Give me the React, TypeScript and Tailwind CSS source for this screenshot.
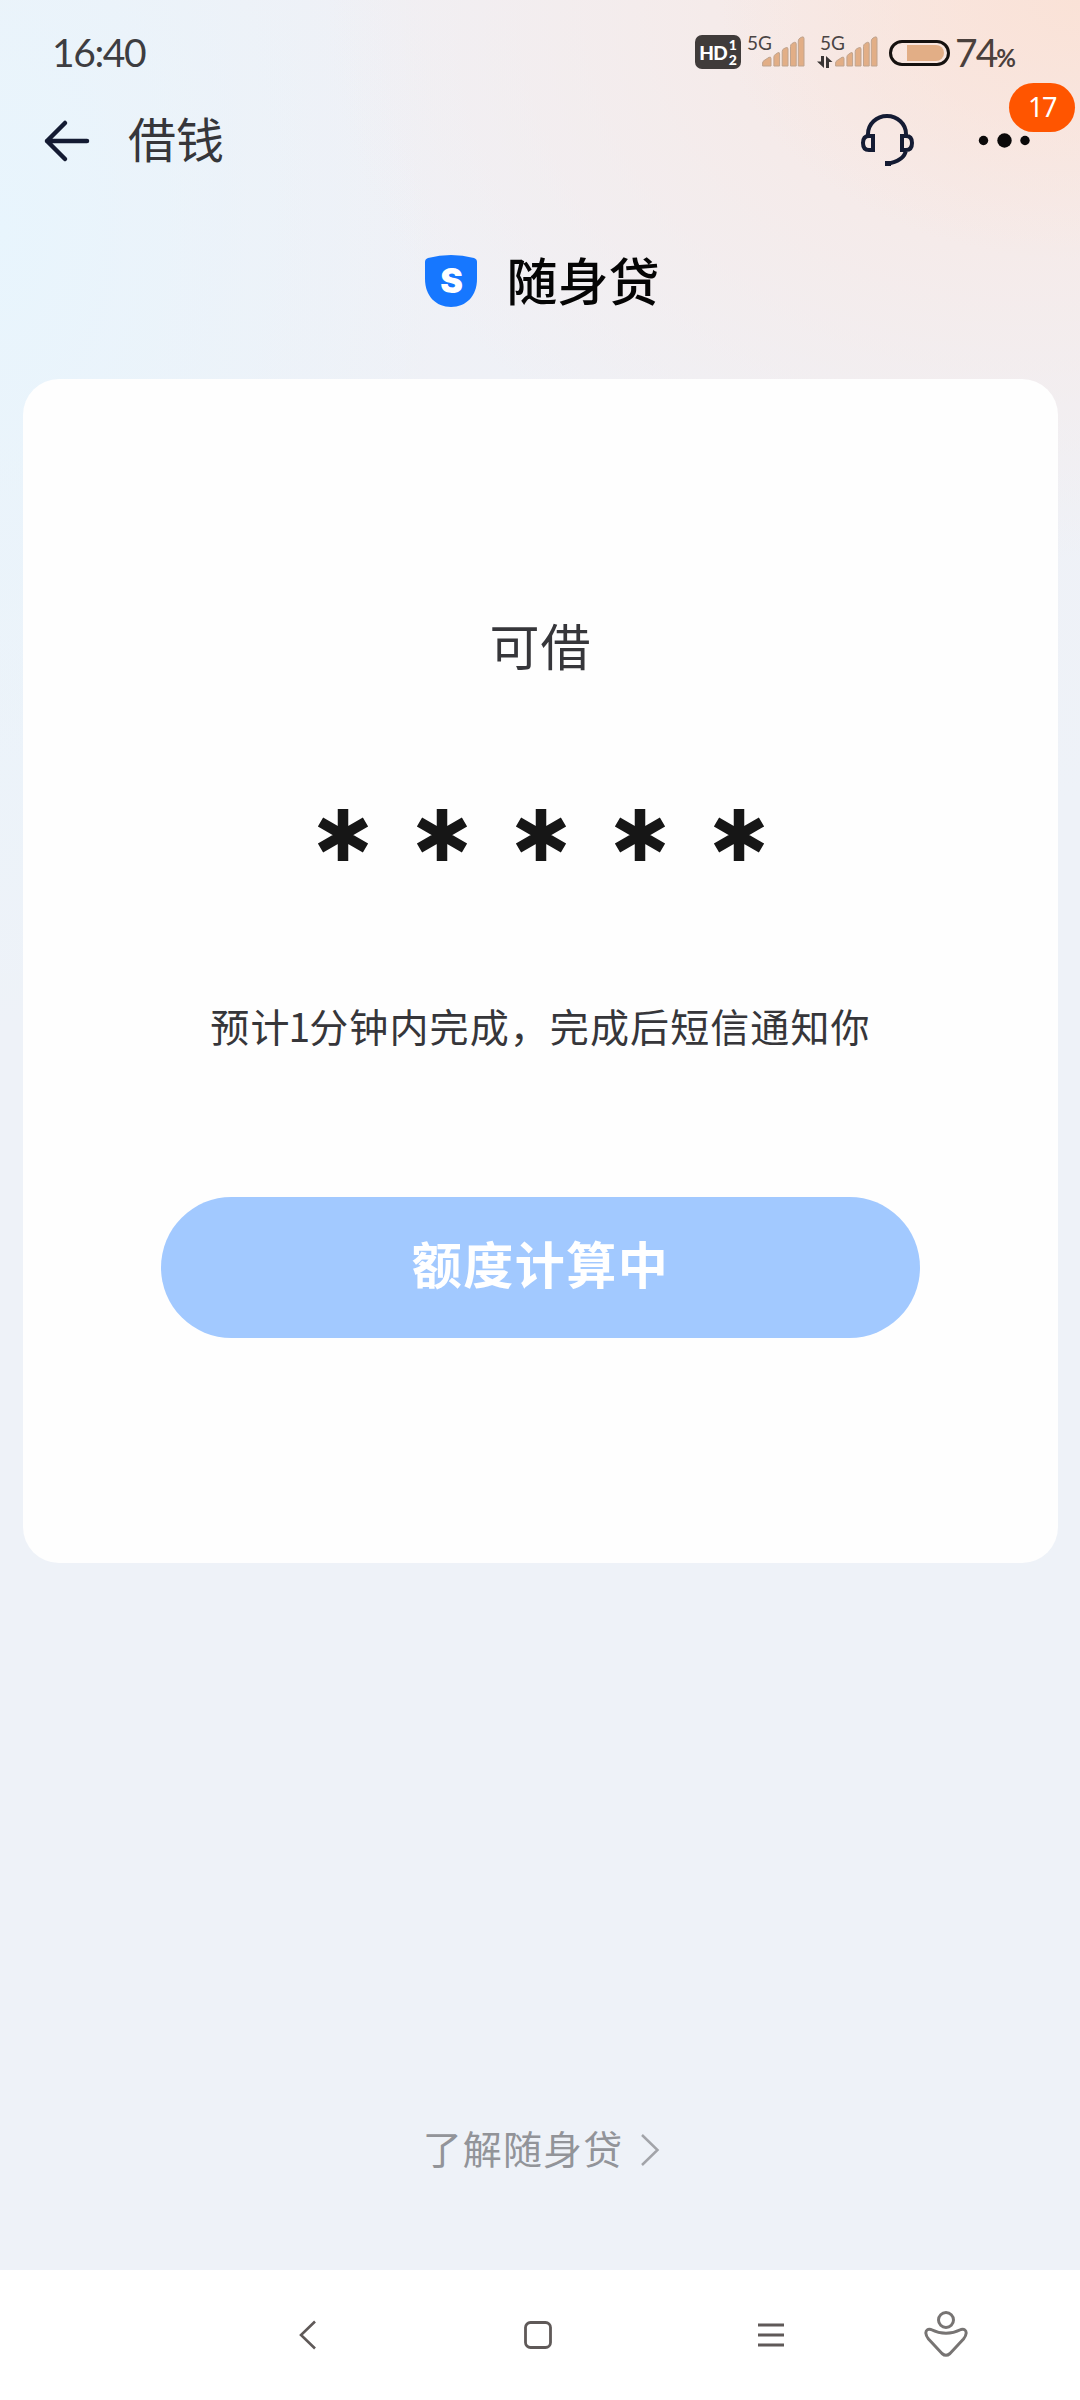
const bars = [
  "M1.600 30V27Q1.600 25.500 3 24.600L8 21.300Q10 20.500 10 22.500V30Z",
  "M12.900 30V21Q12.900 19.500 14.500 18.300L17 16.700Q18.600 16 18.600 18V30Z",
  "M21.200 30V15.500Q21.200 13.500 23 12.600L25 11.700Q27 11 27 13V30Z",
  "M29.500 30V10.500Q29.500 8.500 31 7.500L33.500 6.300Q35.200 5.800 35.200 8V30Z",
  "M37.300 30V5Q37.300 3 39 2L41 1Q43 .400 43 2.500V30Z",
];

function Signal({ data = false }: { data?: boolean }) {
  return (
    <div className="relative w-[58px] h-8">
      <span className="absolute left-0 -top-[3px] font-['Lato'] text-[19px] leading-[20px] text-[#4a4443]">5G</span>
      {data && (
        <svg className="absolute -left-[3px] top-[20px]" width="16" height="12" viewBox="0 0 16 12" fill="#3a3534">
          <path d="M4 0H7V12L0 5.500H4ZM9 12H12V6H15.500L9 0Z" />
        </svg>
      )}
      <svg className="absolute left-[14px] top-0" width="44" height="32" viewBox="0 0 44 32">
        {bars.map((d) => (
          <path key={d} d={d} fill="#e2ae86" stroke="#c0a48f" strokeWidth="1" />
        ))}
      </svg>
    </div>
  );
}

function StatusBar() {
  return (
    <div className="h-[104px] flex items-center justify-between pl-[52px] pr-[64px] font-['Lato'] text-[#3d3d41]">
      <span className="text-[39px] leading-[40px] tracking-[-1.400px]">16:40</span>
      <div className="flex items-center">
        <div className="w-[46px] h-[34px] rounded-[7px] bg-[#403b3a] text-white flex items-center justify-center font-black">
          <span className="text-[19px] leading-none tracking-[-0.800px]">HD</span>
          <span className="flex flex-col text-[14px] leading-[15px] ml-[2px]">
            <span>1</span>
            <span>2</span>
          </span>
        </div>
        <div className="flex gap-[15px] ml-[6px]">
          <Signal />
          <Signal data />
        </div>
        <svg className="ml-[10px] mt-[2px]" width="63" height="28" viewBox="0 0 63 28" fill="none">
          <rect x="2.500" y="2.500" width="58" height="23" rx="11.500" stroke="#15110f" strokeWidth="3" />
          <path d="M19 6H48A8 8 0 0 1 48 22H19Z" fill="#e2ae86" />
        </svg>
        <div className="flex items-baseline ml-[4px] text-[#4a403c]">
          <span className="text-[39px] leading-[40px] tracking-[-2px]">74</span>
          <span className="text-[24px] font-bold leading-none">%</span>
        </div>
      </div>
    </div>
  );
}

function Header() {
  return (
    <header className="relative h-[74px] flex items-center pl-[42px] pr-[48px]">
      <svg width="48" height="44" viewBox="0 0 48 44" fill="none" stroke="#141b33" strokeWidth="4.500" strokeLinecap="round" strokeLinejoin="round">
        <path d="M23 4L5 22L23 40M5 22H45" />
      </svg>
      <h1 className="ml-[38px] -mt-[8px] text-[48px] leading-[60px] text-[#36363a]">借钱</h1>
      <svg className="ml-auto" width="54" height="54" viewBox="0 0 54 54" fill="none" stroke="#141b33" strokeWidth="4">
        <path d="M8 21V20A19 18 0 0 1 46 20V21M13 22H9Q3 22 3 29Q3 36 9 36H13ZM42 22H46Q52 22 52 29Q52 36 46 36H42ZM46 36C45 44 38 48 26 50" />
        <path d="M25 49.500H31" strokeWidth="5" />
      </svg>
      <svg className="ml-[64px]" width="54" height="18" viewBox="0 0 54 18" fill="#0b0909">
        <circle cx="5.500" cy="8.500" r="4.700" />
        <circle cx="26.500" cy="8.500" r="7.200" />
        <circle cx="47" cy="8.500" r="4.700" />
      </svg>
      <span className="absolute right-[5px] -top-[21px] w-[66px] h-[49px] rounded-full bg-[#ff5500] text-white text-[27px] tracking-[-1.500px] font-['Noto_Sans'] flex items-center justify-center">
        17
      </span>
    </header>
  );
}

function Brand() {
  return (
    <div className="h-[201px] pt-[69px] pl-[5px] flex justify-center items-start gap-[29px]">
      <div className="relative w-[52px] h-[52px] mt-[8px]">
        <svg width="52" height="52" viewBox="0 0 52 52">
          <path d="M0 7Q0 4 3 3Q26 -3 49 3Q52 4 52 7V24C52 41 41 52 26 52S0 41 0 24Z" fill="#1677ff" />
        </svg>
        <span className="absolute inset-0 flex items-center justify-center font-['Inter'] font-black text-[34px] leading-none text-white">S</span>
      </div>
      <span className="text-[51px] leading-[64px] font-medium text-[#050505]">随身贷</span>
    </div>
  );
}

function Asterisk() {
  return (
    <svg width="52" height="52" viewBox="0 0 52 52" stroke="#161616" strokeWidth="10.500">
      <path d="M26 0V52M3.500 13L48.500 39M3.500 39L48.500 13" />
    </svg>
  );
}

function NavBar() {
  return (
    <nav className="h-[130px] bg-white flex items-center pl-[298px] text-[#5f5958]">
      <svg width="20" height="32" viewBox="0 0 20 32" fill="none" stroke="currentColor" strokeWidth="2.600">
        <path d="M17 2.500L3 16L17 29.500" />
      </svg>
      <svg className="ml-[205px]" width="30" height="30" viewBox="0 0 30 30" fill="none" stroke="currentColor" strokeWidth="2.800">
        <rect x="2.500" y="2.500" width="25" height="25" rx="5" />
      </svg>
      <svg className="ml-[204px]" width="28" height="26" viewBox="0 0 28 26" stroke="currentColor" strokeWidth="2.800">
        <path d="M1 3H27M1 13H27M1 23H27" />
      </svg>
      <svg className="ml-[138px] -mt-[3px]" width="46" height="50" viewBox="0 0 46 50" fill="none" stroke="#777473" strokeWidth="3" strokeLinejoin="round">
        <circle cx="23" cy="11" r="7.500" />
        <path d="M8 20.500Q23 28 38 20.500Q43 19.500 43.200 24Q43 27 40.500 30L27 44.500Q23 48 19 44.500L5.500 30Q3 27 2.800 24Q3 19.500 8 20.500Z" />
      </svg>
    </nav>
  );
}

export default function App() {
  return (
    <div className="w-[1080px] h-[2400px] flex flex-col overflow-hidden font-['Noto_Sans_CJK_SC',sans-serif] bg-[#eef2f8] bg-[radial-gradient(ellipse_360px_260px_at_100%_0%,#fae2d7_0%,#fae2d700_100%),radial-gradient(ellipse_700px_560px_at_95%_0%,#f8e8e4_0%,#f5ebea_45%,#f1eff100_100%),radial-gradient(ellipse_440px_800px_at_0%_230px,#e8f5fd_0%,#e8f5fd00_100%),linear-gradient(180deg,#f0f0f5_0%,#eef2f8_800px,#eef2f8_100%)]">
      <StatusBar />
      <Header />
      <Brand />
      <main className="ml-[23px] mr-[22px] h-[1184px] rounded-[36px] bg-[#fefefe] flex flex-col items-center">
        <p className="mt-[233px] text-[50px] leading-[64px] tracking-[1px] text-[#36363a]">可借</p>
        <div className="mt-[133px] ml-px flex gap-[47px]">
          {[0, 1, 2, 3, 4].map((i) => (
            <Asterisk key={i} />
          ))}
        </div>
        <p className="mt-[134px] text-[39px] leading-[60px] tracking-[1.100px] text-[#36363a] whitespace-nowrap">
          预计<span className="-mx-[2px]">1</span>分钟内完成，完成后短信通知你
        </p>
        <button className="mt-[142px] w-[759px] h-[141px] rounded-full bg-[#a2c9ff] text-white text-[50px] font-bold tracking-[1.500px]">
          <span className="block -mt-[10px]">额度计算中</span>
        </button>
      </main>
      <a className="mt-auto mb-[93px] pl-[3px] flex items-center justify-center gap-[17px] text-[39px] leading-[60px] tracking-[1.100px] text-[#929499]">
        了解随身贷
        <svg className="mt-[6px]" width="20" height="34" viewBox="0 0 20 34" fill="none" stroke="#a2a4a9" strokeWidth="2.500">
          <path d="M2 2L17.500 17L2 32" />
        </svg>
      </a>
      <NavBar />
    </div>
  );
}
